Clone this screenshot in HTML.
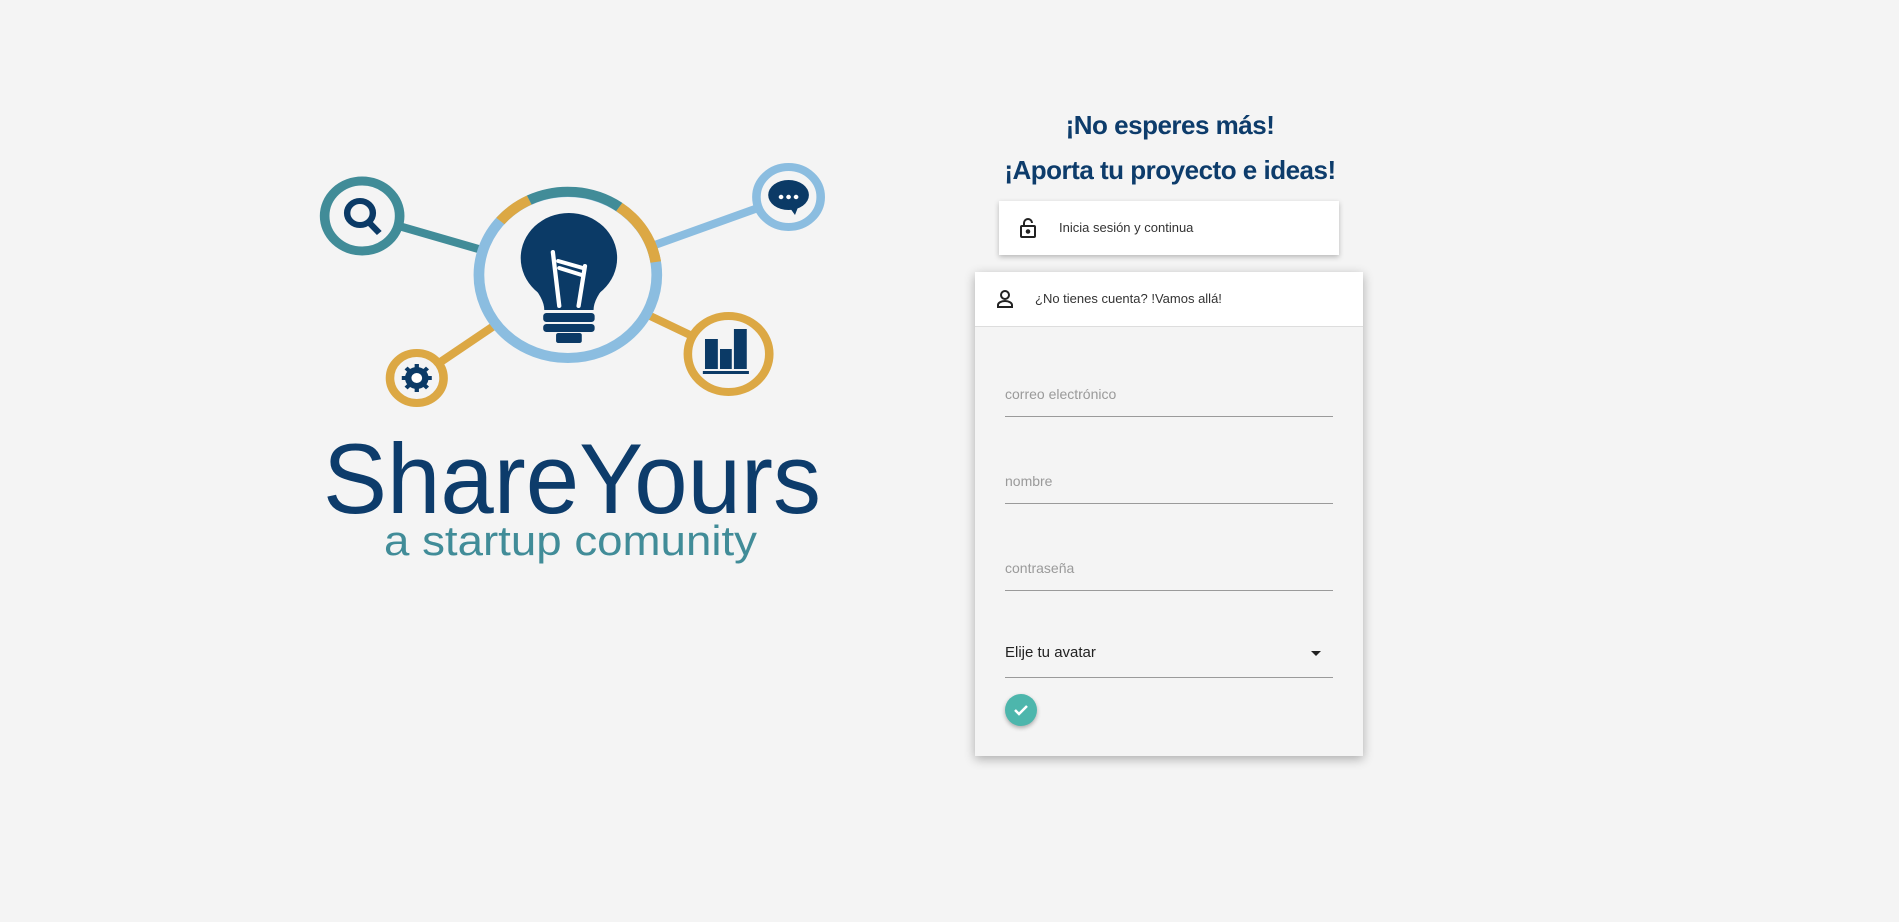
<!DOCTYPE html>
<html><head><meta charset="utf-8"><style>
body{margin:0;width:1899px;height:922px;background:#f4f4f4;font-family:"Liberation Sans",sans-serif;overflow:hidden;position:relative}
.t{position:absolute;left:960px;width:420px;text-align:center;color:#0d3c6b;font-size:26px;font-weight:bold;letter-spacing:-0.5px}
.card1{position:absolute;left:999px;top:201px;width:340px;height:54px;background:#fff;box-shadow:0 2px 5px rgba(0,0,0,.25)}
.card2{position:absolute;left:975px;top:272px;width:388px;height:484px;background:#f4f4f4;box-shadow:0 3px 10px rgba(0,0,0,.3)}
.hdr{height:54px;background:#fff;border-bottom:1px solid #ddd;position:relative}
.lbl{position:absolute;font-size:13px;color:#333}
.in{position:absolute;left:30px;width:328px;border-bottom:1px solid #9a9a9a;height:30px;font-size:14px;color:#9a9a9a}
</style></head><body>
<svg width="900" height="922" style="position:absolute;left:0;top:0">
<g transform="translate(300,0) scale(1.0714,1) translate(-300,0)">
<g stroke-width="8" fill="none">
<line x1="389" y1="225" x2="473" y2="251" stroke="#418c98"/>
<line x1="626" y1="247" x2="730" y2="207" stroke="#8bbde0"/>
<line x1="427" y1="365" x2="485" y2="323" stroke="#dca844"/>
<line x1="621" y1="313" x2="668" y2="337" stroke="#dca844"/>
<circle cx="358" cy="216" r="35" stroke="#418c98" stroke-width="9"/>
<circle cx="756" cy="197" r="30" stroke="#8bbde0" stroke-width="8"/>
<circle cx="700" cy="354" r="38" stroke="#dca844" stroke-width="8"/>
<circle cx="409" cy="378" r="25" stroke="#dca844" stroke-width="8"/>
<circle cx="550" cy="275" r="83" stroke="#8bbde0" stroke-width="10"/>
<path d="M487 221 A83 83 0 0 1 514 200" stroke="#dca844" stroke-width="10"/>
<path d="M514 200 A83 83 0 0 1 598 207" stroke="#418c98" stroke-width="10"/>
<path d="M598 207 A83 83 0 0 1 632 262" stroke="#dca844" stroke-width="10"/>
</g>
<g fill="#0b3a66">
<circle cx="356" cy="213" r="12" fill="none" stroke="#0b3a66" stroke-width="6"/>
<line x1="364" y1="222" x2="374" y2="233" stroke="#0b3a66" stroke-width="6"/>
<ellipse cx="756" cy="195" rx="19" ry="15"/><path d="M756 206 l6 9 l4 -11z"/>
<circle cx="749" cy="197" r="2.2" fill="#fff"/><circle cx="756" cy="197" r="2.2" fill="#fff"/><circle cx="763" cy="197" r="2.2" fill="#fff"/>
<rect x="678" y="339" width="12" height="30"/><rect x="692" y="349" width="11" height="20"/><rect x="705" y="329" width="12" height="40"/><rect x="676" y="371" width="43" height="3"/>
<circle cx="409" cy="378" r="11"/>
<g stroke="#0b3a66" stroke-width="4"><line x1="409" y1="364" x2="409" y2="392"/><line x1="395" y1="378" x2="423" y2="378"/><line x1="399" y1="368" x2="419" y2="388"/><line x1="419" y1="368" x2="399" y2="388"/></g>
<circle cx="409" cy="378" r="5" fill="#fff"/>
<circle cx="551" cy="258" r="45"/>
<path d="M514 282 Q528 298 528 310 L574 310 Q574 298 588 282 Z"/>
<rect x="527" y="313" width="48" height="9" rx="3"/><rect x="527" y="324" width="48" height="8" rx="3"/><rect x="539" y="333" width="24" height="10" rx="2"/>
<g stroke="#fff" stroke-width="4" stroke-linecap="round"><line x1="536" y1="252" x2="542" y2="306"/><line x1="566" y1="266" x2="560" y2="306"/><line x1="542" y1="268" x2="563" y2="275"/><line x1="541" y1="261" x2="564" y2="268"/></g>
</g>
</g>
<text x="323" y="513" font-size="99" fill="#0d3c6b" textLength="498" lengthAdjust="spacingAndGlyphs" font-family="Liberation Sans">ShareYours</text>
<text x="384" y="555" font-size="42" fill="#418c98" textLength="373" lengthAdjust="spacingAndGlyphs" font-family="Liberation Sans">a startup comunity</text>
</svg>
<div class="t" style="top:110px">¡No esperes más!</div>
<div class="t" style="top:155px">¡Aporta tu proyecto e ideas!</div>
<div class="card1">
<svg width="20" height="22" style="position:absolute;left:19px;top:16px" fill="none" stroke="#222" stroke-width="2"><rect x="3" y="9" width="14" height="11" rx="1"/><path d="M6 9V6a4 4 0 0 1 8 0"/><circle cx="10" cy="14.5" r="1.3" fill="#222"/></svg>
<div class="lbl" style="left:60px;top:19px">Inicia sesión y continua</div></div>
<div class="card2">
<div class="hdr">
<svg width="20" height="20" style="position:absolute;left:20px;top:17px" fill="none" stroke="#222" stroke-width="2"><circle cx="10" cy="6" r="4"/><path d="M3 18v-2c0-2 3-4 7-4s7 2 7 4v2z"/></svg>
<div class="lbl" style="left:60px;top:19px">¿No tienes cuenta? !Vamos allá!</div></div>
<div class="in" style="top:114px">correo electrónico</div>
<div class="in" style="top:201px">nombre</div>
<div class="in" style="top:288px">contraseña</div>
<div class="in" style="top:372px;height:33px;color:#222;font-size:15px">Elije tu avatar<span style="position:absolute;right:12px;top:7px;border:5px solid transparent;border-top-color:#222"></span></div>
<div style="position:absolute;left:30px;top:422px;width:32px;height:32px;border-radius:50%;background:#4db6ac;box-shadow:0 2px 4px rgba(0,0,0,.3)"><svg width="32" height="32" fill="none" stroke="#fff" stroke-width="2.5"><path d="M10 16l4 4 8-8"/></svg></div>
</div>
</body></html>
